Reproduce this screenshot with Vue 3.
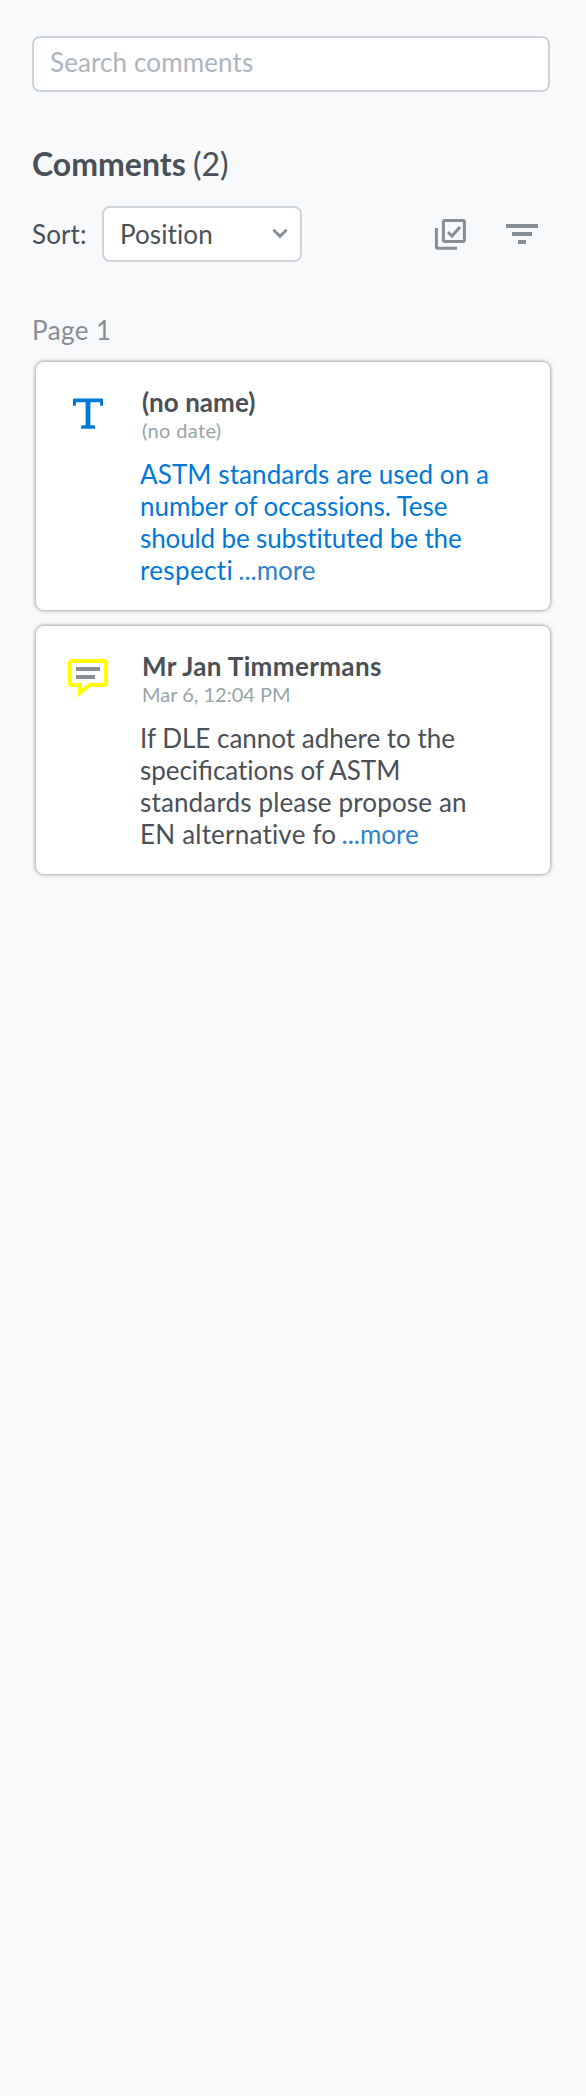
<script setup>
const comments = [
  {
    type: 'text',
    name: { text: '(no name)', spacing: 0.05 },
    date: { text: '(no date)', spacing: 0.35 },
    lines: [
      { text: 'ASTM standards are used on a', spacing: 0.09 },
      { text: 'number of occassions. Tese', spacing: -0.04 },
      { text: 'should be substituted be the', spacing: -0.12 },
    ],
    last: { text: 'respecti', spacing: 0.35 },
  },
  {
    type: 'note',
    name: { text: 'Mr Jan Timmermans', spacing: 0.37 },
    date: { text: 'Mar 6, 12:04 PM', spacing: 0 },
    lines: [
      { text: 'If DLE cannot adhere to the', spacing: 0 },
      { parts: ['speci', 'fi', 'cations of ASTM'], spacing: -0.04 },
      { text: 'standards please propose an', spacing: 0.15 },
    ],
    last: { text: 'EN alternative fo', spacing: 0.21 },
  },
]
const track = (t) => ({ letterSpacing: t.spacing ? t.spacing + 'px' : 'normal' })
</script>

<template>
  <main class="panel">
    <input class="search" type="text" placeholder="Search comments" />
    <h1 class="title"><b>Comments</b> (2)</h1>
    <div class="toolbar">
      <span class="label">Sort:</span>
      <button class="select">
        <span>Position</span>
        <svg width="16" height="12" viewBox="0 0 16 12">
          <path d="M1.4 1.8L8 8.4L14.6 1.8" fill="none" stroke="#868e96" stroke-width="3" />
        </svg>
      </button>
      <div class="actions">
        <svg width="32" height="32" viewBox="0 0 32 32" fill="none" stroke="#868e96" stroke-width="3">
          <rect x="9.4" y="2.4" width="21" height="21" rx="1.5" />
          <path d="M2.4 10V29Q2.4 30.3 3.7 30.3H23" />
          <path d="M14 14.2L18 18L26 9" />
        </svg>
        <svg width="32" height="20" viewBox="0 0 32 20" fill="#868e96">
          <path d="M0 0H32V4H0zM6 8H26V12H6zM12 16H20V20H12z" />
        </svg>
      </div>
    </div>
    <h2 class="page">Page 1</h2>
    <section class="list">
      <article v-for="c in comments" :key="c.type" class="card" :class="c.type">
        <div class="icon">
          <svg v-if="c.type === 'text'" width="40" height="40" viewBox="0 0 40 40" fill="#0078d7">
            <path d="M6 1.5H34Q35 1.5 35 2.5V8.7H32V5.3H22.4V28.2H26.2Q27 28.2 27 29V31.8H13.2V29Q13.2 28.2 14 28.2H17.6V5.3H8V8.7H5V2.5Q5 1.5 6 1.5Z" />
          </svg>
          <svg v-else width="40" height="40" viewBox="0 0 40 40">
            <path d="M4 1H36Q40 1 40 5V25Q40 29 36 29H22L10 39V29H4Q0 29 0 25V5Q0 1 4 1ZM4 5V25H14V30.5L21 25H36V5Z" fill="#ff0" fill-rule="evenodd" />
            <path d="M8 9H32V13H8zM8 17H27V21H8z" fill="#868e96" />
          </svg>
        </div>
        <div class="content">
          <div class="name" :style="track(c.name)">{{ c.name.text }}</div>
          <div class="date" :style="track(c.date)">{{ c.date.text }}</div>
          <div class="body">
            <div v-for="(l, i) in c.lines" :key="i" :style="track(l)">
              <template v-if="l.parts">{{ l.parts[0] }}<span class="lig">{{ l.parts[1] }}</span>{{ l.parts[2] }}</template>
              <template v-else>{{ l.text }}</template>
            </div>
            <div><span :style="track(c.last)">{{ c.last.text }}</span> <a class="more">...more</a></div>
          </div>
        </div>
      </article>
    </section>
  </main>
</template>

<style>
body {
  background: #f8f9fb;
}
</style>

<style scoped>
.panel {
  box-sizing: border-box;
  min-height: 2096px;
  padding: 36px 36px 0 32px;
  background: #f8f9fb;
  color: #495057;
  font: 26px/32px Lato, sans-serif;
  font-variant-ligatures: none;
}
.search {
  display: block;
  box-sizing: border-box;
  width: 518px;
  height: 56px;
  padding: 0 16px 4px;
  border: 2px solid #ced4da;
  border-radius: 8px;
  background: #fff;
  font: inherit;
  letter-spacing: 0.12px;
}
.search::placeholder {
  color: #adb5bd;
  opacity: 1;
}
.title {
  margin: 52px 0 0;
  font-size: 32px;
  font-weight: 400;
  line-height: 40px;
  word-spacing: -1px;
}
.toolbar {
  display: flex;
  align-items: center;
  height: 56px;
  margin-top: 22px;
}
.label {
  width: 70px;
  letter-spacing: 0.1px;
}
.select {
  display: flex;
  align-items: center;
  justify-content: space-between;
  box-sizing: border-box;
  width: 200px;
  height: 56px;
  padding: 0 12px 0 16px;
  border: 2px solid #ced4da;
  border-radius: 8px;
  background: #fff;
  color: inherit;
  font: inherit;
  font-variant-ligatures: none;
  letter-spacing: 0.1px;
}
.actions {
  display: flex;
  align-items: center;
  gap: 40px;
  margin-left: auto;
  margin-right: 12px;
}
.page {
  margin: 52px 0 0;
  color: #868e96;
  font-size: 26px;
  font-weight: 400;
  line-height: 32px;
  letter-spacing: 0.45px;
}
.list {
  display: flex;
  flex-direction: column;
  gap: 16px;
  margin: 16px 0 0 4px;
}
.card {
  display: flex;
  box-sizing: border-box;
  width: 514px;
  height: 248px;
  padding: 24px 0 0 32px;
  border-radius: 8px;
  background: #fff;
  box-shadow: 0 0 4px rgba(0, 0, 0, 0.5);
}
.icon {
  width: 74px;
  padding-top: 8px;
}
.text .icon {
  padding-top: 11px;
}
.name {
  font-weight: 700;
  line-height: 32px;
}
.date {
  color: #98a5a8;
  font-size: 20px;
  line-height: 24px;
}
.body {
  margin: 16px 0 0 -2px;
  white-space: nowrap;
}
.lig {
  font-variant-ligatures: common-ligatures;
  letter-spacing: normal;
}
.text .body {
  color: #0078d7;
}
.more,
.text .more {
  margin-left: -1.4px;
  color: #3182ce;
}
</style>
